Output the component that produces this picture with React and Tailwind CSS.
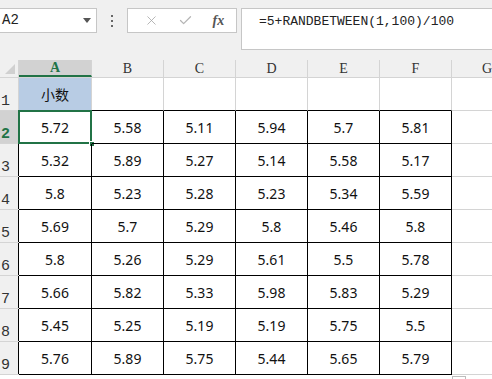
import { X, Check } from "lucide-react";

const cols = ["A", "B", "C", "D", "E", "F"];

const data = [
  ["5.72", "5.58", "5.11", "5.94", "5.7", "5.81"],
  ["5.32", "5.89", "5.27", "5.14", "5.58", "5.17"],
  ["5.8", "5.23", "5.28", "5.23", "5.34", "5.59"],
  ["5.69", "5.7", "5.29", "5.8", "5.46", "5.8"],
  ["5.8", "5.26", "5.29", "5.61", "5.5", "5.78"],
  ["5.66", "5.82", "5.33", "5.98", "5.83", "5.29"],
  ["5.45", "5.25", "5.19", "5.19", "5.75", "5.5"],
  ["5.76", "5.89", "5.75", "5.44", "5.65", "5.79"],
];

const mono = { fontFamily: "'Liberation Mono', 'Noto Sans CJK SC', monospace" };
const serif = { fontFamily: "'Liberation Serif', 'Noto Sans CJK SC', serif" };

function Toolbar() {
  return (
    <div className="h-[60px] bg-[#f0f0f0] flex items-start pt-[8px]">
      <div className="w-[97px] h-[25px] bg-white border border-[#c6c6c6] border-l-0 flex items-center justify-between pl-[2px] pr-[5px]">
        <span className="text-[14px] text-[#222]" style={mono}>A2</span>
        <span className="w-0 h-0 border-l-[4px] border-r-[4px] border-t-[5px] border-l-transparent border-r-transparent border-t-[#555]" />
      </div>
      <div className="w-[30px] h-[25px] flex flex-col items-center justify-center gap-[3px]">
        <span className="w-[2px] h-[2px] bg-[#666]" />
        <span className="w-[2px] h-[2px] bg-[#666]" />
        <span className="w-[2px] h-[2px] bg-[#666]" />
      </div>
      <div className="w-[110px] h-[25px] bg-white border border-[#c6c6c6] flex items-center justify-around pl-[6px] pr-[2px]">
        <X size={15} strokeWidth={1.3} className="text-[#a6a6a6]" />
        <Check size={15} strokeWidth={2} className="text-[#b5b5b5]" />
        <span className="text-[14px] italic text-[#555] font-semibold" style={serif}>
          fx
        </span>
      </div>
      <div className="ml-[4px] flex-1 h-[42px] bg-white border border-[#c6c6c6] border-r-0 pl-[17px] pt-[5px]">
        <div className="text-[13px] text-[#222] leading-[16px]" style={mono}>
          =5+RANDBETWEEN(1,100)/100
        </div>
      </div>
    </div>
  );
}

function HeaderRow() {
  return (
    <div className="flex h-[18px] bg-[#f0f0f0] border-b border-[#d4d4d4]">
      <div className="w-[19px] shrink-0 relative border-r border-[#d4d4d4]">
        <span className="absolute left-[5px] top-[4px] w-0 h-0 border-b-[10px] border-l-[10px] border-b-[#d0d0d0] border-l-transparent" />
      </div>
      {cols.map((c, i) => (
        <div
          key={c}
          className={`${i === 0 ? "w-[73px] bg-[#d2d2d2] border-b-2 border-[#217346] text-[#217346] font-bold" : "w-[72px] text-[#333]"} shrink-0 border-r border-r-[#d4d4d4] flex items-center justify-center text-[14px] leading-none`}
          style={serif}
        >
          {c}
        </div>
      ))}
      <div className="flex-1 flex items-center justify-center text-[14px] text-[#333] pl-[30px]" style={serif}>
        G
      </div>
    </div>
  );
}

function RowHead({ n, active, black }) {
  return (
    <div
      className={`w-[19px] shrink-0 flex items-end pl-[1px] pb-[1px] text-[15px] leading-none border-r ${
        active ? "bg-[#d2d2d2] text-[#217346] font-bold" : "bg-[#f0f0f0] text-[#333]"
      } ${black ? "border-r-black" : "border-r-[#d4d4d4]"}`}
      style={mono}
    >
      {n}
    </div>
  );
}

export default function App() {
  const numFont = { fontFamily: "'Noto Sans', 'Liberation Sans', sans-serif" };
  return (
    <div className="w-[492px] h-[379px] overflow-hidden bg-white relative">
      <Toolbar />
      <HeaderRow />

      {/* row 1 */}
      <div className="flex h-[33px]">
        <div className="w-[19px] shrink-0 flex items-end pl-[1px] pb-[1px] text-[15px] leading-none bg-[#f0f0f0] text-[#333] border-r border-b border-[#d4d4d4]" style={mono}>
          1
        </div>
        {cols.map((c, i) => (
          <div
            key={c}
            className={`${i === 0 ? "w-[73px] bg-[#b8cce4]" : "w-[72px]"} shrink-0 border-r border-r-[#d4d4d4] border-b border-b-black flex items-center justify-center text-[14px] text-[#111]`}
            style={{ fontFamily: "'Noto Sans CJK SC', sans-serif" }}
          >
            {i === 0 ? "小数" : ""}
          </div>
        ))}
        <div className="flex-1 border-b border-[#d4d4d4]" />
      </div>

      {data.map((row, r) => (
        <div key={r} className="flex h-[33px]">
          <div className="flex border-b border-[#d4d4d4]">
            <RowHead n={r + 2} active={r === 0} black />
          </div>
          {row.map((v, i) => (
            <div
              key={i}
              className={`${i === 0 ? "w-[73px]" : "w-[72px]"} shrink-0 relative border-r border-b border-black flex items-center justify-center text-[14px] text-[#111]`}
              style={numFont}
            >
              {v}
              {r === 0 && i === 0 && (
                <>
                  <span className="absolute -left-[1px] -top-[1px] right-[-1px] bottom-[-1px] border-2 border-[#217346]" />
                  <span className="absolute right-[-4px] bottom-[-4px] w-[6px] h-[6px] bg-[#217346] border border-white" />
                </>
              )}
            </div>
          ))}
          <div className="flex-1 border-b border-[#d4d4d4]" />
        </div>
      ))}

      <div className="absolute left-[452px] top-[376px] w-[14px] h-[8px] border border-[#bdbdbd] bg-white" />
    </div>
  );
}
